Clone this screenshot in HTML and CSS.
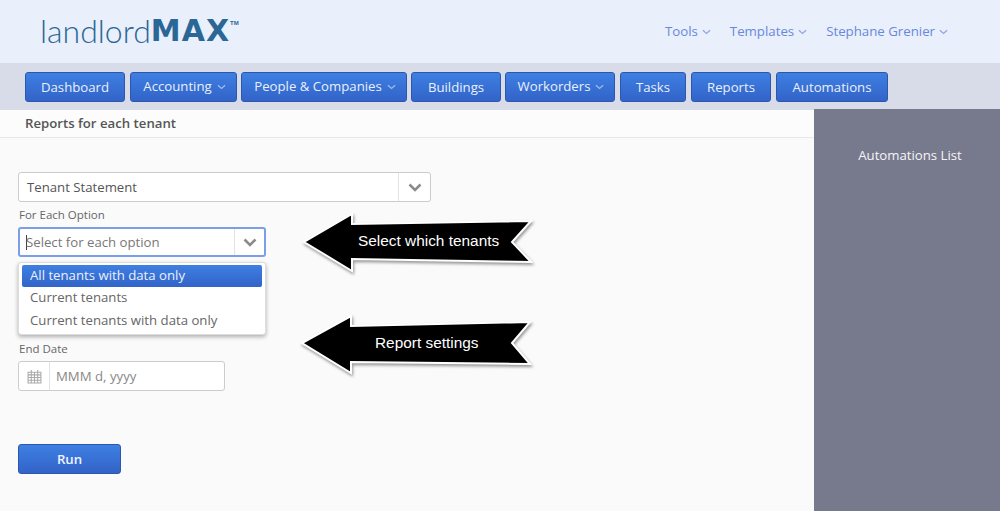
FILE: index.html
```html
<!DOCTYPE html>
<html lang="en">
<head>
<meta charset="utf-8">
<title>LandlordMAX Reports</title>
<link rel="stylesheet" href="styles.css">
</head>
<body>
<header class="top">
  <div class="logo"><span class="logo-a">landlord</span><span class="logo-b">MAX</span><span class="logo-tm">TM</span></div>
  <nav class="user">
    <a class="user-link">Tools<svg class="chev" viewBox="0 0 10 6"><path d="M1 1l4 3.6L9 1"/></svg></a>
    <a class="user-link">Templates<svg class="chev" viewBox="0 0 10 6"><path d="M1 1l4 3.6L9 1"/></svg></a>
    <a class="user-link">Stephane Grenier<svg class="chev" viewBox="0 0 10 6"><path d="M1 1l4 3.6L9 1"/></svg></a>
  </nav>
</header>
<nav class="menu">
  <a class="btn w-dash">Dashboard</a>
  <a class="btn up w-acc">Accounting<svg class="chev pale" viewBox="0 0 10 6"><path d="M1 1l4 3.6L9 1"/></svg></a>
  <a class="btn up w-people">People &amp; Companies<svg class="chev pale" viewBox="0 0 10 6"><path d="M1 1l4 3.6L9 1"/></svg></a>
  <a class="btn w-build">Buildings</a>
  <a class="btn up w-work">Workorders<svg class="chev pale" viewBox="0 0 10 6"><path d="M1 1l4 3.6L9 1"/></svg></a>
  <a class="btn w-tasks">Tasks</a>
  <a class="btn w-rep">Reports</a>
  <a class="btn w-auto">Automations</a>
</nav>
<div class="main">
  <main class="content">
    <h1 class="title">Reports for each tenant</h1>
    <form class="form">
      <div class="select wide">
        <span class="value">Tenant Statement</span>
        <span class="arrow"><svg class="big-chev" viewBox="0 0 14 9"><path d="M1.5 1.5L7 7l5.500-5.500"/></svg></span>
      </div>
      <label class="label l-each">For Each Option</label>
      <div class="combo">
        <div class="select narrow focus">
          <span class="value ph"><i class="caret"></i>Select for each option</span>
          <span class="arrow"><svg class="big-chev" viewBox="0 0 14 9"><path d="M1.500 1.500L7 7l5.500-5.500"/></svg></span>
        </div>
        <ul class="drop">
          <li class="opt on">All tenants with data only</li>
          <li class="opt">Current tenants</li>
          <li class="opt">Current tenants with data only</li>
        </ul>
      </div>
      <div class="date hidden-date"><span class="cal"></span></div>
      <label class="label l-end">End Date</label>
      <div class="date">
        <span class="cal"><svg class="cal-icon" viewBox="0 0 14 14"><path d="M1 3h12v10H1zM1 5.500h12M1 8h12M1 10.500h12M4 3v10M7 3v10M10 3v10M4 1v3M10 1v3"/></svg></span>
        <span class="value ph2">MMM d, yyyy</span>
      </div>
      <button class="run" type="button">Run</button>
    </form>
    <div class="callout c1">
      <svg class="shape" viewBox="0 0 250 70"><polygon points="7,33 55,5 55,15 234,12 215,33 234,53 55,50 55,62"/></svg>
      <span class="callout-text t1">Select which tenants</span>
    </div>
    <div class="callout c2">
      <svg class="shape" viewBox="0 0 250 70"><polygon points="7,33 56,6 56,16 235,12 217,33 235,54 56,52 56,63"/></svg>
      <span class="callout-text t2">Report settings</span>
    </div>
  </main>
  <aside class="side"><div class="side-title">Automations List</div></aside>
</div>
</body>
</html>
```
FILE: styles.css
```css
* { box-sizing: border-box; }
html, body { margin: 0; height: 511px; overflow: hidden; }
body { font-family: "Open Sans", "Noto Sans", sans-serif; font-size: 13.2px; color: #555; background: #fafafa; display: flex; flex-direction: column; }

.top { height: 63px; background: #e9effb; display: flex; justify-content: space-between; padding: 0 52px 0 40px; }
.logo { display: flex; align-items: flex-start; padding-top: 13px; color: #2a6797; height: 63px; }
.logo-a { font-family: "Lato", sans-serif; font-weight: 300; font-size: 32px; line-height: 36px; }
.logo-b { font-family: "DejaVu Sans", sans-serif; font-weight: 700; font-size: 30px; line-height: 36px; letter-spacing: 1px; }
.logo-tm { font-family: "Liberation Sans", sans-serif; font-weight: 700; font-size: 6px; line-height: 8px; margin-top: 6px; }
.user { display: flex; gap: 19px; padding-top: 22px; }
.user-link { color: #6689dc; line-height: 19px; font-size: 13.250px; white-space: nowrap; }
.chev { width: 9px; height: 6px; margin-left: 4px; fill: none; stroke: #8ea9e4; stroke-width: 1.500; vertical-align: 1px; }
.chev.pale { stroke: #9dbcef; margin-left: 5px; }

.menu { height: 47px; background: #d8dce8; display: flex; padding: 9px 0 0 25px; gap: 4px; }
.btn { height: 30px; background: linear-gradient(#3f7fe2, #3263c8); border: 1px solid #2b57ad; border-radius: 3px; color: #e9f0fb; font-size: 13.2px; line-height: 29px; text-align: center; white-space: nowrap; }
.btn.up { line-height: 27px; padding-left: 2px; }
.w-dash { width: 100px; margin-right: 1px; }
.w-acc { width: 107px; }
.w-people { width: 166px; }
.w-build { width: 90px; }
.w-work { width: 110px; margin-right: 1px; }
.w-tasks { width: 66px; margin-right: 1px; }
.w-rep { width: 80px; margin-right: 1px; }
.w-auto { width: 112px; }

.main { flex: 1; display: flex; min-height: 0; }
.content { flex: 1; position: relative; }
.title { margin: 0; height: 28px; padding-left: 25px; border-bottom: 1px solid #e8e8e8; font-size: 13.2px; font-weight: 600; line-height: 26px; color: #555; background: #fcfcfc; }
.side { width: 186px; background: #777a8c; margin-top: -1px; padding-top: 37px; text-align: center; color: #f4f4f8; font-size: 13.2px; line-height: 18px; }
.side-title { padding-left: 6px; }

.form { padding: 34px 0 0 18px; }
.select { display: flex; height: 30px; background: #fff; border: 1px solid #ccc; border-radius: 3px; }
.wide { width: 413px; }
.narrow { width: 248px; }
.focus { border: 2px solid #7a9fe6; }
.value { flex: 1; padding-left: 8px; font-size: 13.2px; line-height: 28px; color: #555; }
.focus .value { line-height: 26px; padding-left: 6px; }
.ph { color: #777; position: relative; }
.caret { display: inline-block; width: 1px; height: 15px; background: #444; vertical-align: -3px; margin-right: -1px; }
.arrow { width: 32px; border-left: 1px solid #e3e3e3; display: flex; align-items: center; justify-content: center; }
.focus .arrow { width: 30px; }
.big-chev { width: 14px; height: 9px; fill: none; stroke: #8a8a8a; stroke-width: 2.500; }

.label { display: block; font-size: 11.500px; line-height: 16px; color: #666; padding-left: 1px; }
.l-each { margin-top: 5px; margin-bottom: 4px; }
.combo { position: relative; width: 248px; }
.drop { position: absolute; z-index: 2; top: 35px; left: 0; width: 248px; height: 73px; margin: 0; padding: 2px 3px 3px; list-style: none; background: #fff; border: 1px solid #ddd; border-radius: 3px; box-shadow: 0 2px 4px rgba(0,0,0,.3); }
.opt { height: 22px; padding-left: 8px; font-size: 13.2px; line-height: 21px; color: #666; white-space: nowrap; }
.opt:last-child { line-height: 23px; }
.opt.on { background: linear-gradient(#3f7fe2, #3263c8); color: #eaf1fc; border-radius: 2px; }
.hidden-date { margin-top: 48px; }
.l-end { margin-top: 6px; margin-bottom: 4px; }
.date { display: flex; width: 207px; height: 30px; background: #fff; border: 1px solid #ccc; border-radius: 3px; }
.cal { width: 31px; border-right: 1px solid #e3e3e3; display: flex; align-items: center; justify-content: center; }
.cal-icon { width: 15px; height: 15px; fill: none; stroke: #aaa; stroke-width: 1; }
.ph2 { color: #888; padding-left: 6px; }
.run { display: block; width: 103px; height: 30px; margin-top: 53px; background: linear-gradient(#3f7fe2, #3263c8); border: 1px solid #2b57ad; border-radius: 3px; color: #f0f5fd; font-family: inherit; font-size: 13.2px; font-weight: 600; padding: 0; }

.callout { position: absolute; width: 250px; height: 70px; }
.c1 { left: 297px; top: 99px; }
.c2 { left: 295px; top: 200px; }
.shape { position: absolute; inset: 0; width: 250px; height: 70px; overflow: visible; filter: drop-shadow(1px 2px 1.500px rgba(0,0,0,.4)); }
.shape polygon { fill: #000; stroke: #fff; stroke-width: 2; }
.callout-text { position: absolute; color: #fff; font-family: "Liberation Sans", sans-serif; font-size: 15.400px; line-height: 18px; white-space: nowrap; }
.t1 { left: 61px; top: 23px; }
.t2 { left: 80px; top: 24px; }
```
